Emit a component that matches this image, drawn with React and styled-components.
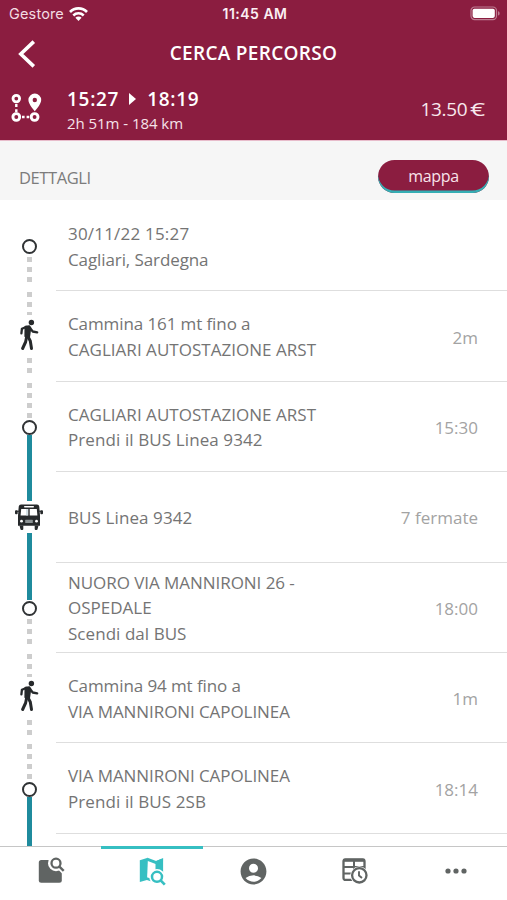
import React from "react";
import styled, { createGlobalStyle } from "styled-components";
import { MdAccountCircle } from "react-icons/md";

const stops = [
  {
    id: "start",
    marker: "stop",
    before: "none",
    after: "dotted",
    lines: [["30/11/22 15:27", 0.2], ["Cagliari, Sardegna", -0.1]],
  },
  {
    id: "walk-1",
    marker: "walk",
    before: "dotted",
    after: "dotted",
    lines: [["Cammina 161 mt fino a", -0.1], ["CAGLIARI AUTOSTAZIONE ARST", 0.03]],
    value: "2m",
  },
  {
    id: "arst",
    marker: "stop",
    before: "dotted",
    after: "solid",
    lines: [["CAGLIARI AUTOSTAZIONE ARST", 0.03], ["Prendi il BUS Linea 9342", 0.1]],
    value: "15:30",
  },
  {
    id: "bus",
    marker: "bus",
    before: "solid",
    after: "solid",
    lines: [["BUS Linea 9342", 0.1]],
    value: "7 fermate",
  },
  {
    id: "nuoro",
    marker: "stop",
    before: "solid",
    after: "dotted",
    lines: [["NUORO VIA MANNIRONI 26 -", -0.05], ["OSPEDALE", 0], ["Scendi dal BUS", 0.05]],
    value: "18:00",
  },
  {
    id: "walk-2",
    marker: "walk",
    before: "dotted",
    after: "dotted",
    lines: [["Cammina 94 mt fino a", -0.1], ["VIA MANNIRONI CAPOLINEA", -0.08]],
    value: "1m",
  },
  {
    id: "capolinea",
    marker: "stop",
    before: "dotted",
    after: "solid",
    lines: [["VIA MANNIRONI CAPOLINEA", -0.08], ["Prendi il BUS 2SB", 0.1]],
    value: "18:14",
  },
];

function WifiIcon() {
  return (
    <svg width="19" height="14" viewBox="0 0 19 14" fill="none" stroke="#fff">
      <path d="M1 5a12 12 0 0 1 17 0" strokeWidth="2.7" />
      <path d="M4.3 8.5a7.4 7.4 0 0 1 10.4 0" strokeWidth="2.5" />
      <path d="M9.5 14 6.4 10.7a4.4 4.4 0 0 1 6.2 0z" fill="#fff" stroke="none" />
    </svg>
  );
}

function BatteryIcon() {
  return (
    <svg width="31" height="15" viewBox="0 0 31 15">
      <rect x="1" y="1" width="25.5" height="12.6" rx="3.6" fill="none" stroke="#bd7d92" strokeWidth="1.2" />
      <rect x="2.6" y="2.7" width="22.2" height="9.2" rx="1.8" fill="#fff" />
      <path d="M28 5.2c2.2.6 2.2 3.8 0 4.4z" fill="#bd7d92" />
    </svg>
  );
}

function BackIcon() {
  return (
    <svg width="18" height="28" viewBox="0 0 18 28" fill="none" stroke="#fff" strokeWidth="3.6">
      <path d="M15.8 1.6 2.8 14l13 12.4" />
    </svg>
  );
}

function RouteIcon() {
  return (
    <svg width="31" height="30" viewBox="0 0 31 30" fill="none" stroke="#fff">
      <circle cx="5.3" cy="5.6" r="3.3" strokeWidth="2.8" />
      <circle cx="5.3" cy="24" r="3.4" strokeWidth="2.9" />
      <circle cx="23.6" cy="24" r="3.4" strokeWidth="2.9" />
      <path d="M5.3 11v8.5" strokeWidth="2.4" strokeDasharray="3 2.2" />
      <path d="M11 24h8.5" strokeWidth="2.4" strokeDasharray="2.6 2" />
      <path
        d="M23.8.6A6.4 6.4 0 0 0 17.4 7c0 4.2 6.4 11.2 6.4 11.2S30.2 11.2 30.2 7A6.4 6.4 0 0 0 23.8.6zm0 4.2a2.2 2.2 0 1 1 0 4.4 2.2 2.2 0 0 1 0-4.4z"
        fill="#fff"
        fillRule="evenodd"
        stroke="none"
      />
    </svg>
  );
}

function WalkIcon() {
  return (
    <svg width="20" height="32" viewBox="0 0 20 32" fill="none" stroke="#26292b" strokeLinecap="round" strokeLinejoin="round">
      <circle cx="12.4" cy="3.5" r="2.7" fill="#26292b" stroke="none" />
      <path d="M6.5 7.8 10.3 7.2l1 1.8-1.2 8.5-3.7-.2z" fill="#26292b" strokeWidth="2" />
      <path d="M7.2 8 2.9 9.8l-.5 4.6" strokeWidth="2.3" />
      <path d="m11 9 2.7 3.5 4.5.8" strokeWidth="2.3" />
      <path d="M7.8 17 6.6 23l-3 6.5" strokeWidth="3" />
      <path d="m8.7 17 2.6 5 1.2 7.5" strokeWidth="3" />
    </svg>
  );
}

function BusIcon() {
  return (
    <svg width="30" height="28" viewBox="0 0 30 28">
      <path d="M7 1.5h16q2 0 2.3 2.3L26 13v9.8H4V13l.7-9.200Q5 1.5 7 1.5z" fill="#26292b" />
      <path d="M5.500 22.500h3.800V26q0 1-1 1h-.8q-1 0-1.100-1zM20.700 22.500h3.800l-.9 3.500q-.1 1-1.100 1h-.8q-1 0-1-1z" fill="#26292b" />
      <path d="M5 8.2H2.5M25 8.2h2.5" fill="none" stroke="#26292b" strokeWidth="1.1" />
      <rect x="1" y="7.2" width="2.7" height="4" rx="1" fill="#26292b" />
      <rect x="26.3" y="7.2" width="2.7" height="4" rx="1" fill="#26292b" />
      <rect x="10" y="3" width="10" height="1.5" rx=".7" fill="#fff" />
      <path d="M7.2 6h7.1v6.5H6.6zM15.7 6h7.1l.6 6.5h-7.7z" fill="#fff" />
      <path d="M13 6v6.5" stroke="#c3d4dc" strokeWidth="1.4" />
      <circle cx="7.5" cy="18.2" r="1.4" fill="#fff" />
      <circle cx="22.5" cy="18.2" r="1.4" fill="#fff" />
      <rect x="11.2" y="16.8" width="7.6" height="3.2" rx=".5" fill="#8b9294" />
    </svg>
  );
}

function FolderSearchIcon() {
  return (
    <svg width="28" height="28" viewBox="0 0 28 28" fill="none" stroke="#606463">
      <rect x="1.8" y="3" width="23" height="22.8" rx="2.5" fill="#606463" stroke="none" />
      <circle cx="19" cy="6.2" r="8" fill="#fff" stroke="none" />
      <path d="m22 9.5 5 5" stroke="#fff" strokeWidth="5.5" />
      <circle cx="19" cy="6.2" r="4.5" strokeWidth="2.3" />
      <path d="m22.4 9.6 4.3 4.2" strokeWidth="2.4" />
    </svg>
  );
}

function MapSearchIcon() {
  return (
    <svg width="28" height="30" viewBox="0 0 28 30" fill="none" stroke="#36bfc2">
      <path d="m1.8 4.3 8-2.5v3.7L9 24l-7.200 2z" fill="#36bfc2" stroke="none" />
      <path d="m9 3.2 9.3 3.5 5.500-2.200" strokeWidth="3" />
      <path d="M17.5 5.2 25.1 2v15.5l-7.6-3z" fill="#36bfc2" stroke="none" />
      <path d="m8.5 22.6 4.5 1.4" strokeWidth="2.6" />
      <circle cx="19" cy="20.8" r="7.8" fill="#fff" stroke="none" />
      <circle cx="19" cy="20.8" r="5" strokeWidth="2.5" />
      <path d="m22.6 24.4 4.2 4.2" strokeWidth="2.7" />
    </svg>
  );
}

function TimetableIcon() {
  return (
    <svg width="28" height="28" viewBox="0 0 28 28" fill="none" stroke="#606463">
      <rect x="2.5" y="2.3" width="21" height="20.6" rx="2" strokeWidth="2.3" />
      <path d="M2.5 3.3h21" strokeWidth="3" />
      <path d="M2.5 10h21M2.5 16.5h10M13 4v9" strokeWidth="2" />
      <circle cx="18.3" cy="18.3" r="9" fill="#fff" stroke="none" />
      <circle cx="18.3" cy="18.3" r="7.2" strokeWidth="2.3" />
      <path d="M18 14.3v4.3l3 2.5" strokeWidth="1.9" />
    </svg>
  );
}

function MoreIcon() {
  return (
    <svg width="22" height="6" viewBox="0 0 22 6" fill="#606463">
      <circle cx="3" cy="3" r="2.6" />
      <circle cx="11" cy="3" r="2.6" />
      <circle cx="19" cy="3" r="2.6" />
    </svg>
  );
}

function Marker({ type }) {
  if (type === "walk") return <WalkIcon />;
  if (type === "bus") return <BusIcon />;
  return <StopDot />;
}

export default function App() {
  return (
    <Screen>
      <GlobalStyle />
      <Header>
        <StatusBar>
          <Carrier>
            Gestore <WifiIcon />
          </Carrier>
          <Clock>11:45 AM</Clock>
          <Battery>
            <BatteryIcon />
          </Battery>
        </StatusBar>
        <TitleBar>
          <BackButton aria-label="Indietro">
            <BackIcon />
          </BackButton>
          <Title>CERCA PERCORSO</Title>
        </TitleBar>
        <Summary>
          <RouteIcon />
          <Trip>
            <Times>
              15:27 <Arrow /> 18:19
            </Times>
            <Distance>2h 51m - 184 km</Distance>
          </Trip>
          <Price>
            13.50<Euro>€</Euro>
          </Price>
        </Summary>
      </Header>
      <SubHeader>
        <SubTitle>DETTAGLI</SubTitle>
        <MapButton>mappa</MapButton>
      </SubHeader>
      <List>
        {stops.map((stop) => (
          <Row key={stop.id}>
            <Rail>
              <Segment $line={stop.before} $offset={1} />
              <MarkerBox $type={stop.marker}>
                <Marker type={stop.marker} />
              </MarkerBox>
              <Segment $line={stop.after} $offset={stop.marker === "walk" ? 0 : 3} $gap={stop.after === "dotted"} />
            </Rail>
            <Content>
              <div>
                {stop.lines.map(([text, tracking]) => (
                  <Line key={text} $tracking={tracking}>
                    {text}
                  </Line>
                ))}
              </div>
              <Value>{stop.value}</Value>
            </Content>
          </Row>
        ))}
        <Rail>
          <Segment $line="solid" />
        </Rail>
      </List>
      <TabBar>
        <Tab aria-label="Cerca">
          <FolderSearchIcon />
        </Tab>
        <Tab $active aria-label="Percorso">
          <MapSearchIcon />
        </Tab>
        <Tab aria-label="Profilo">
          <MdAccountCircle size={31} />
        </Tab>
        <Tab aria-label="Orari">
          <TimetableIcon />
        </Tab>
        <Tab aria-label="Altro">
          <MoreIcon />
        </Tab>
      </TabBar>
    </Screen>
  );
}

const GlobalStyle = createGlobalStyle`
  *,
  *::before,
  *::after {
    box-sizing: border-box;
  }

  body {
    margin: 0;
    background: #fff;
    font-family: "Open Sans", "Noto Sans", sans-serif;
  }

  svg {
    display: block;
    flex: none;
  }
`;

const PlainButton = styled.button`
  padding: 0;
  border: none;
  background: none;
  font-family: inherit;
  cursor: pointer;
`;

const Screen = styled.div`
  display: flex;
  flex-direction: column;
  width: 507px;
  height: 900px;
  overflow: hidden;
  background: #fff;
`;

const Header = styled.header`
  flex: none;
  height: 141px;
  color: #fff;
  background: #8b1d40;
  border-bottom: 1px solid #e8bccb;
`;

const StatusBar = styled.div`
  display: grid;
  grid-template-columns: 1fr auto 1fr;
  align-items: center;
  height: 27px;
  padding: 0 6px 0 9px;
  font-family: Inter, "Liberation Sans", sans-serif;
`;

const Carrier = styled.div`
  display: flex;
  align-items: center;
  gap: 5px;
  font-size: 14.5px;
  color: #f3dce3;
  letter-spacing: 0.15px;
`;

const Clock = styled.div`
  font-size: 14px;
  font-weight: 600;
  color: #fbeff3;
  letter-spacing: 0.5px;
`;

const Battery = styled.div`
  display: flex;
  justify-content: flex-end;
`;

const TitleBar = styled.div`
  display: grid;
  grid-template-columns: 50px 1fr 50px;
  align-items: center;
  height: 53px;
`;

const BackButton = styled(PlainButton)`
  justify-self: start;
  padding-left: 18px;
`;

const Title = styled.h1`
  margin: 0;
  padding-bottom: 2px;
  font-size: 19px;
  font-weight: 600;
  line-height: 26px;
  letter-spacing: 0.3px;
  text-align: center;
`;

const Summary = styled.div`
  display: flex;
  align-items: center;
  height: 60px;
  padding: 0 21px 4px 11px;
`;

const Trip = styled.div`
  flex: 1;
  padding: 4px 0 0 25px;
`;

const Times = styled.div`
  display: flex;
  align-items: center;
  font-size: 19px;
  font-weight: 600;
  line-height: 26px;
  letter-spacing: 0.7px;
`;

const Arrow = styled.i`
  margin: 0 11px 0 10px;
  border: solid transparent;
  border-width: 6px 0 6px 7px;
  border-left-color: #fff;
`;

const Distance = styled.div`
  font-size: 15px;
  line-height: 22px;
  letter-spacing: -0.05px;
  color: #f6e3e9;
`;

const Price = styled.div`
  display: flex;
  align-items: center;
  padding-top: 1px;
  font-size: 19px;
  letter-spacing: -0.3px;
  color: #f8e8ed;
`;

const Euro = styled.span`
  display: inline-block;
  margin: 0 3px 0 5px;
  font-size: 19px;
  font-weight: 500;
  transform: scaleX(1.4);
`;

const SubHeader = styled.div`
  display: flex;
  flex: none;
  align-items: center;
  justify-content: space-between;
  height: 59px;
  padding: 0 18px 0 19px;
  background: #f6f6f6;
`;

const SubTitle = styled.h2`
  margin: 0;
  padding-top: 14px;
  font-size: 16.5px;
  font-weight: 400;
  letter-spacing: -0.4px;
  color: #7c7c7c;
`;

const MapButton = styled(PlainButton)`
  width: 111px;
  height: 33px;
  margin-top: 12px;
  padding-bottom: 1px;
  border-radius: 17px;
  box-shadow: inset 0 -2.5px 0 #35aeb4;
  background: #8b1d40;
  font-size: 16px;
  letter-spacing: -0.3px;
  color: #f8e3ea;
`;

const List = styled.div`
  display: flex;
  flex: 1;
  flex-direction: column;
  min-height: 0;
  padding-top: 1px;
  overflow: hidden;
`;

const Row = styled.div`
  display: flex;
  flex: none;
  height: 90.4px;
`;

const Rail = styled.div`
  display: grid;
  flex: none;
  grid-template-rows: 1fr auto 1fr;
  justify-items: center;
  width: 56px;
  padding-left: 2px;

  &:last-child {
    flex: 1;
    grid-template-rows: 1fr;
  }
`;

const lines = {
  none: "none",
  solid: "linear-gradient(#1f8b9d, #1f8b9d)",
  dotted: "linear-gradient(#cdcdcd 5px, transparent 5px)",
};

const Segment = styled.div`
  width: 5px;
  padding-bottom: ${(p) => (p.$gap ? 8 : 0)}px;
  background-image: ${(p) => lines[p.$line]};
  background-size: 100% ${(p) => (p.$line === "dotted" ? "10px" : "100%")};
  background-position: 0 ${(p) => (p.$line === "dotted" ? p.$offset : 0)}px;
  background-clip: content-box;
`;

const markerHeights = { stop: 16, walk: 43, bus: 32 };

const MarkerBox = styled.div`
  display: flex;
  align-items: center;
  justify-content: center;
  height: ${(p) => markerHeights[p.$type]}px;
  padding-top: ${(p) => (p.$type === "stop" ? 1 : 0)}px;
  padding-bottom: ${(p) => (p.$type === "walk" ? 4 : 0)}px;
`;

const StopDot = styled.i`
  width: 15px;
  height: 15px;
  border: 2.5px solid #303335;
  border-radius: 50%;
  background: #fff;
`;

const Content = styled.div`
  display: flex;
  flex: 1;
  align-items: center;
  justify-content: space-between;
  padding: 2px 29px 0 12px;
  border-bottom: 1.5px solid #dedede;
`;

const Line = styled.div`
  font-size: 17px;
  line-height: 25.7px;
  letter-spacing: ${(p) => p.$tracking}px;
  white-space: nowrap;
  color: #747474;
`;

const Value = styled.div`
  font-size: 17px;
  line-height: 25px;
  color: #a3a3a3;
`;

const TabBar = styled.nav`
  display: grid;
  flex: none;
  grid-template-columns: repeat(5, 1fr);
  height: 54px;
  border-top: 1.5px solid #c6c6c6;
  background: #fff;
`;

const Tab = styled(PlainButton)`
  display: flex;
  align-items: center;
  justify-content: center;
  margin-top: -1px;
  padding-bottom: 7px;
  border-top: 3px solid ${(p) => (p.$active ? "#36bfc2" : "transparent")};
  color: #606463;
`;
